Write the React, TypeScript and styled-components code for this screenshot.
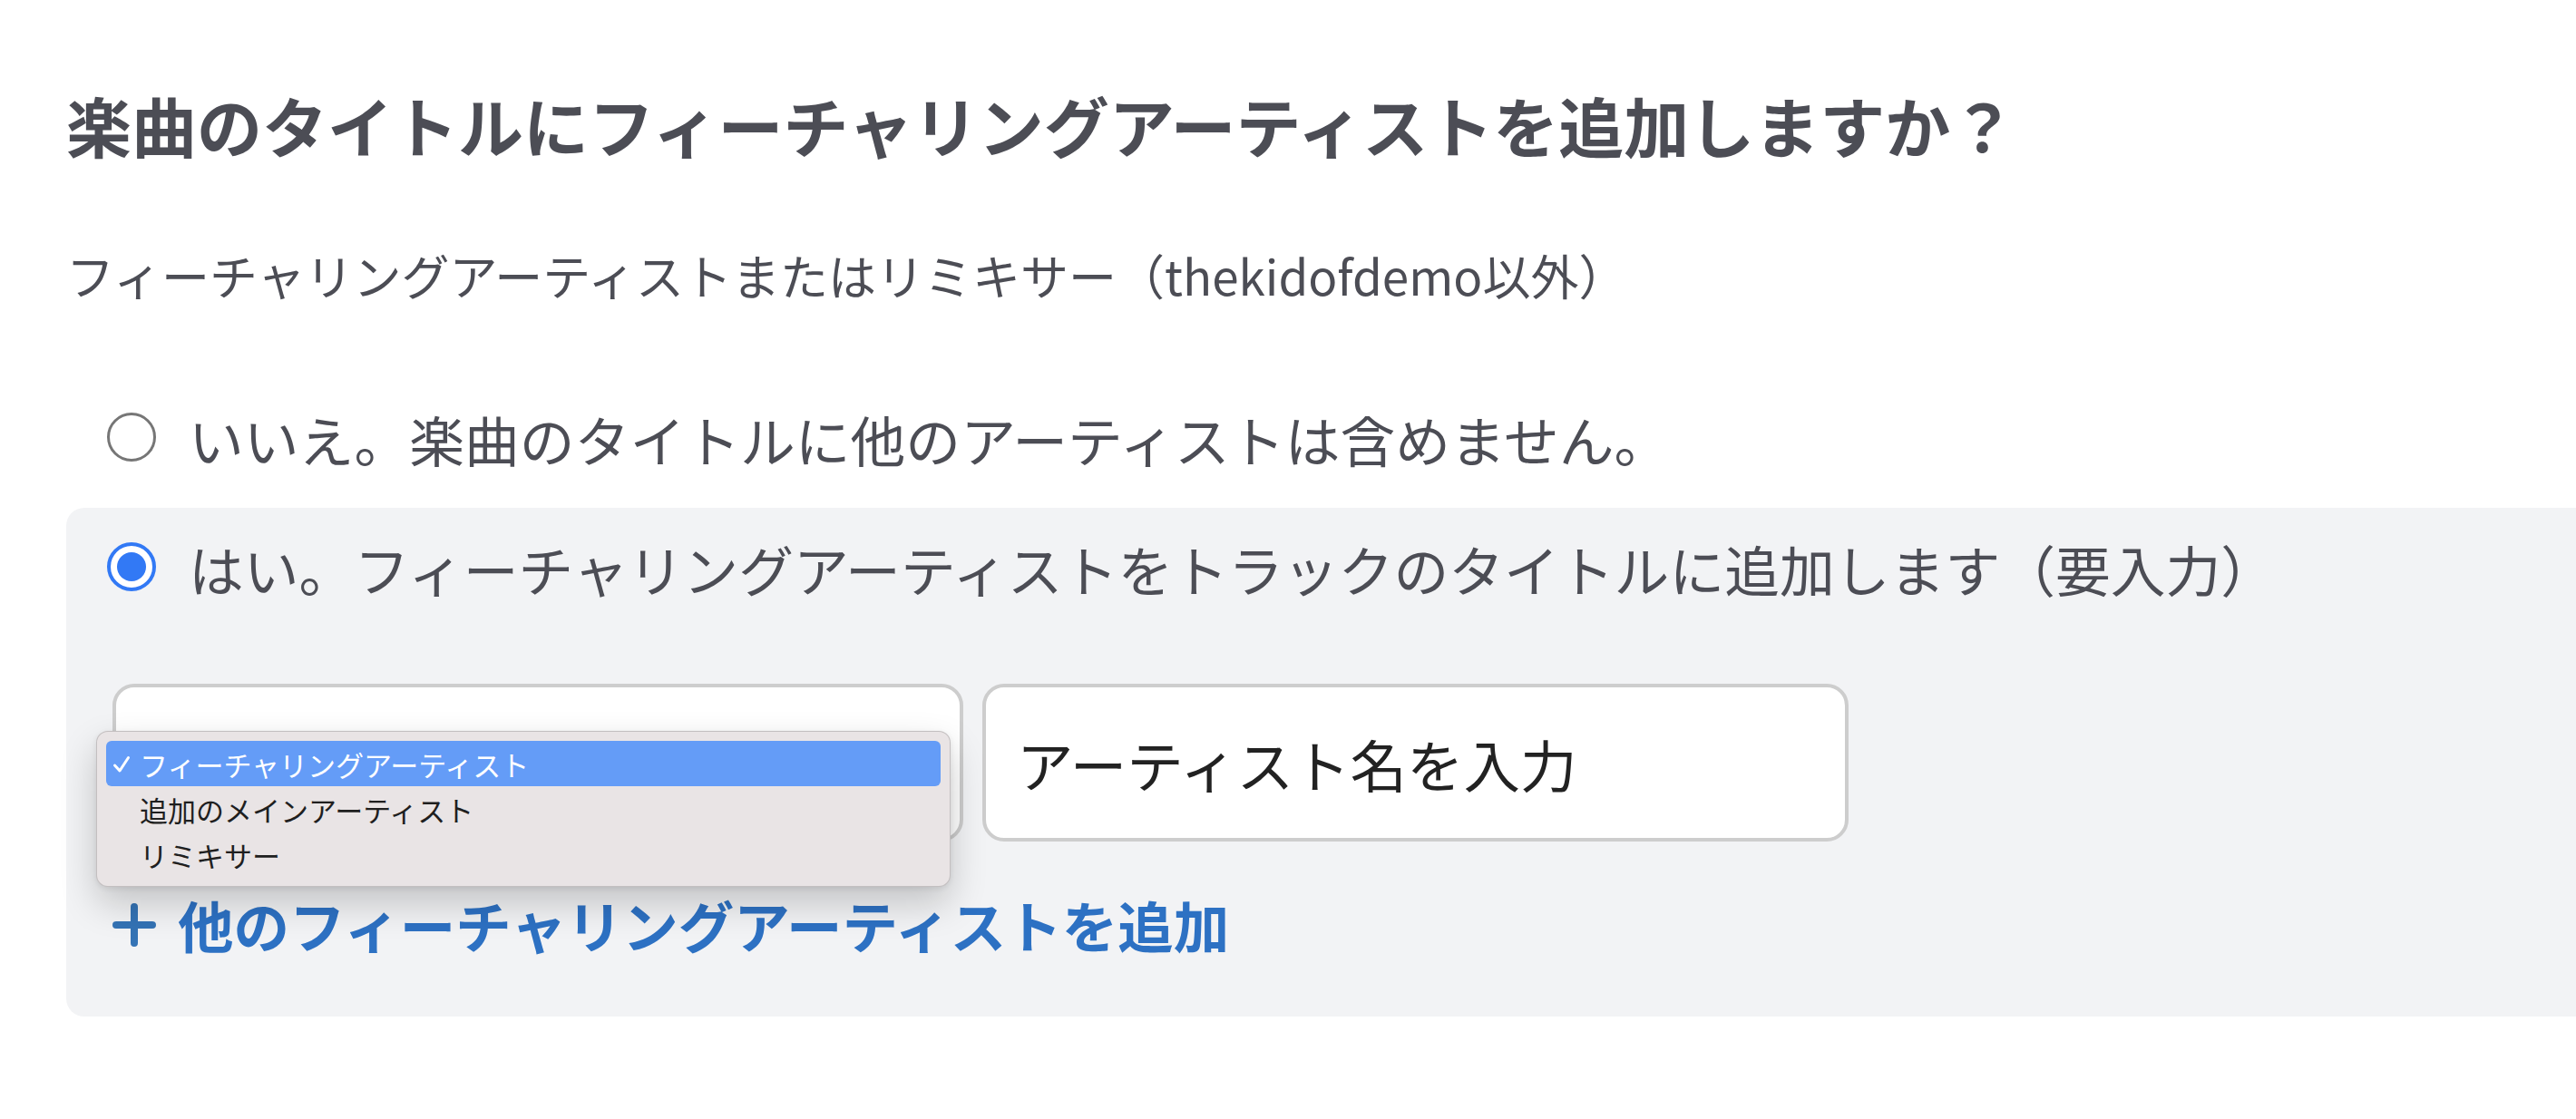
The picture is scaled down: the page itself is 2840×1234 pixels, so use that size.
import React from "react";
import styled, { createGlobalStyle } from "styled-components";

const GlobalStyle = createGlobalStyle`
  html, body { margin: 0; padding: 0; background: #ffffff; }
  body {
    font-family: "Noto Sans CJK JP", "Noto Sans", sans-serif;
    overflow: hidden;
  }
  #root { width: 2840px; min-height: 1234px; overflow: hidden; }
`;

const Page = styled.main`
  padding: 94px 0 0 73px;
  color: #4c4d55;
`;

const Title = styled.h1`
  margin: 0;
  font-size: 72px;
  line-height: 86px;
  font-weight: 700;
`;

const Subtitle = styled.p`
  margin: 92px 0 0;
  font-size: 53px;
  line-height: 62px;
  font-weight: 400;
`;

const Options = styled.div`
  margin-top: 114px;
  margin-right: -40px;
  display: flex;
  flex-direction: column;
  gap: 40px;
`;

const OptionBlock = styled.div<{ $active?: boolean }>`
  padding: ${(p) => (p.$active ? "31px 0 65px 45px" : "0 0 0 45px")};
  background: ${(p) => (p.$active ? "#f2f3f5" : "transparent")};
  border-radius: 20px;
`;

const OptionRow = styled.label`
  display: flex;
  align-items: center;
  gap: 36px;
  font-size: 60.8px;
  line-height: 72px;
  cursor: pointer;
`;

const Radio = styled.span<{ $checked?: boolean }>`
  flex: none;
  box-sizing: border-box;
  width: 54px;
  height: 54px;
  margin-bottom: 5px;
  border-radius: 50%;
  background: #ffffff;
  border: ${(p) => (p.$checked ? "4px solid #3279f5" : "3px solid #767676")};
  display: flex;
  align-items: center;
  justify-content: center;
  &::after {
    content: "";
    display: ${(p) => (p.$checked ? "block" : "none")};
    width: 32px;
    height: 32px;
    border-radius: 50%;
    background: #3279f5;
  }
`;

const FieldRow = styled.div`
  margin: 91px 0 0 6px;
  display: flex;
  gap: 21px;
`;

const SelectBox = styled.div`
  position: relative;
  box-sizing: border-box;
  width: 938px;
  height: 174px;
  background: #ffffff;
  border: 4px solid #cdcdcd;
  border-radius: 24px;
`;

const Menu = styled.ul`
  position: absolute;
  left: -22px;
  top: 48px;
  z-index: 2;
  box-sizing: border-box;
  width: 942px;
  margin: 0;
  padding: 10px;
  list-style: none;
  background: #e9e4e5;
  border: 1px solid rgba(0, 0, 0, 0.16);
  border-radius: 13px;
  box-shadow: 0 18px 40px rgba(0, 0, 0, 0.2), 0 2px 6px rgba(0, 0, 0, 0.08);
`;

const MenuItem = styled.li<{ $selected?: boolean }>`
  position: relative;
  height: 50px;
  display: flex;
  align-items: center;
  padding-left: 37px;
  border-radius: 6px;
  font-size: 31px;
  color: ${(p) => (p.$selected ? "#ffffff" : "#1f1f1f")};
  background: ${(p) => (p.$selected ? "#649cf7" : "transparent")};
`;

const Check = styled.svg`
  position: absolute;
  left: 7px;
  top: 16px;
`;

const TextInput = styled.input`
  box-sizing: border-box;
  width: 955px;
  height: 174px;
  padding: 0 0 0 34px;
  background: #ffffff;
  border: 4px solid #cdcdcd;
  border-radius: 24px;
  font-family: inherit;
  font-size: 62.5px;
  color: #222222;
  outline: none;
  &::placeholder {
    color: #222222;
    opacity: 1;
  }
`;

const AddLink = styled.button`
  margin: 56px 0 0 6px;
  padding: 0;
  display: flex;
  align-items: center;
  gap: 24px;
  background: none;
  border: none;
  font-family: inherit;
  font-size: 61.5px;
  line-height: 72px;
  font-weight: 700;
  color: #2d71c3;
  cursor: pointer;
`;

const PlusIcon = () => (
  <svg width="48" height="48" viewBox="0 0 48 48" aria-hidden="true">
    <path d="M4 24H44M24 4V44" stroke="#3473b5" strokeWidth="8" strokeLinecap="round" fill="none" />
  </svg>
);

const roles = ["フィーチャリングアーティスト", "追加のメインアーティスト", "リミキサー"];

export default function App() {
  return (
    <>
      <GlobalStyle />
      <Page>
        <Title>楽曲のタイトルにフィーチャリングアーティストを追加しますか？</Title>
        <Subtitle>フィーチャリングアーティストまたはリミキサー（thekidofdemo以外）</Subtitle>
        <Options>
          <OptionBlock>
            <OptionRow>
              <Radio />
              いいえ。楽曲のタイトルに他のアーティストは含めません。
            </OptionRow>
          </OptionBlock>
          <OptionBlock $active>
            <OptionRow>
              <Radio $checked />
              はい。フィーチャリングアーティストをトラックのタイトルに追加します（要入力）
            </OptionRow>
            <FieldRow>
              <SelectBox>
                <Menu>
                  {roles.map((r, i) => (
                    <MenuItem key={r} $selected={i === 0}>
                      {i === 0 && (
                        <Check width="20" height="20" viewBox="0 0 20 20" aria-hidden="true">
                          <path d="M2.5 11L8 17L17.5 2.5" stroke="#ffffff" strokeWidth="3" fill="none" strokeLinecap="round" strokeLinejoin="round" />
                        </Check>
                      )}
                      {r}
                    </MenuItem>
                  ))}
                </Menu>
              </SelectBox>
              <TextInput placeholder="アーティスト名を入力" />
            </FieldRow>
            <AddLink>
              <PlusIcon />
              他のフィーチャリングアーティストを追加
            </AddLink>
          </OptionBlock>
        </Options>
      </Page>
    </>
  );
}
